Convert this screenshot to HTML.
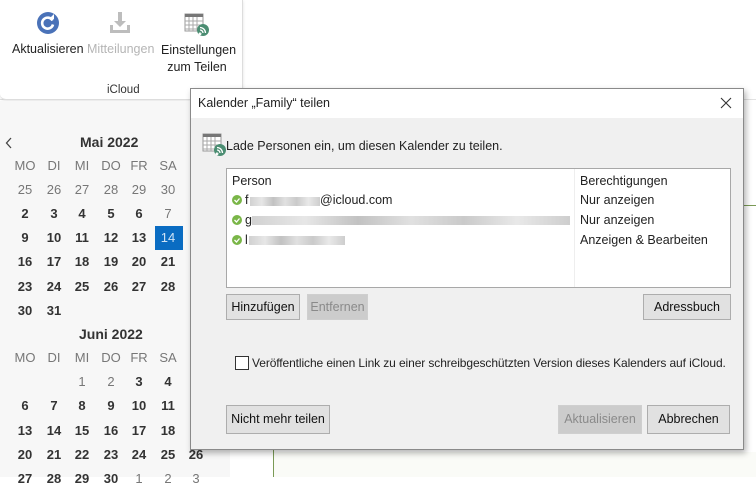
<!DOCTYPE html>
<html><head><meta charset="utf-8"><style>
*{margin:0;padding:0;box-sizing:border-box}
body{width:756px;height:477px;overflow:hidden;position:relative;background:#fff;font-family:"Liberation Sans",sans-serif;font-size:12.5px;color:#222}
.a{position:absolute}
.ribbon{left:0;top:0;width:756px;height:100px;background:#fff;border-bottom:1px solid #e2e2e2}
.pane{left:0;top:101px;width:230px;height:376px;background:#f7f7f7}
.c{position:absolute;width:28px;text-align:center;font-size:13px}
.b{font-weight:bold;color:#333}
.g{color:#777}
.btn{position:absolute;border:1px solid #adadad;background:#e1e1e1;text-align:center;font-size:12.5px;color:#111}
.dis{border-color:#cfcfcf;background:#cccccc;color:#8a8a8a}
.blur{position:absolute;height:9px;background:linear-gradient(90deg,#ccc,#e4e4e4,#bbb,#ddd,#c4c4c4,#e6e6e6,#c8c8c8);opacity:.9}
</style></head><body>
<div class="a ribbon"></div>
<div class="a" style="left:242px;top:6px;width:1px;height:84px;background:#ddd"></div>
<div class="a" style="left:0;top:0;width:243px;height:100px;border-right:1px solid #ddd;border-bottom:1px solid #ddd;border-radius:0 0 6px 6px;box-shadow:0 1px 3px rgba(0,0,0,.12)"></div>
<svg class="a" style="left:36px;top:11px" width="24" height="24" viewBox="0 0 24 24"><circle cx="12" cy="12" r="11" fill="#4a72b8"/><path d="M16.5 9.5A5.5 5.5 0 1 0 17 13.5" stroke="#fff" stroke-width="2.6" fill="none"/><path d="M13 8h5V3z" fill="#fff"/></svg>
<svg class="a" style="left:108px;top:11px" width="24" height="24" viewBox="0 0 24 24"><path d="M10 1h4v9h4l-6 6-6-6h4z" fill="#bdbdbd"/><path d="M2 14v8h20v-8h-3v5H5v-5z" fill="#bdbdbd"/></svg>
<svg class="a" style="left:184px;top:13px" width="26" height="24" viewBox="0 0 26 24"><rect x="1" y="1" width="18" height="17" fill="#fff" stroke="#999"/><rect x="1" y="1" width="18" height="3" fill="#777"/><path d="M1 8h18M1 12h18M1 16h18M5 4v14M9 4v14M13 4v14" stroke="#aaa"/><circle cx="19" cy="17" r="6" fill="#4b8d72"/><path d="M16 20a0.8 0.8 0 1 0 .1 0M16 17a3 3 0 0 1 3 3M16 14.5a5.5 5.5 0 0 1 5.5 5.5" stroke="#fff" stroke-width="1.3" fill="none"/></svg>
<div class="a" style="left:12px;top:42px;font-size:12.5px">Aktualisieren</div>
<div class="a" style="left:87px;top:42px;font-size:12.5px;color:#b5b5b5">Mitteilungen</div>
<div class="a" style="left:161px;top:42px;font-size:12.5px;text-align:center;width:72px;line-height:17px">Einstellungen zum Teilen</div>
<div class="a" style="left:107px;top:84px;font-size:11.5px;color:#333">iCloud</div>
<div class="a pane"></div>
<div class="a" style="left:230px;top:452px;width:526px;height:25px;background:#fafbf7"></div>
<div class="a" style="left:230px;top:452px;width:43px;height:25px;background:#fff"></div>
<div class="a" style="left:273px;top:449px;width:1px;height:28px;background:#7a9a55"></div>
<div class="a" style="left:743px;top:205px;width:13px;height:1px;background:#7a9a55"></div>
<svg class="a" style="left:5px;top:137px" width="8" height="12"><path d="M6 1L1.5 6 6 11" stroke="#444" stroke-width="1.3" fill="none"/></svg>
<div class="a b" style="left:80px;top:134px;font-size:14px">Mai 2022</div>
<div class="a b" style="left:79px;top:326px;font-size:14px">Juni 2022</div>
<div id="cal"></div>
<div class="a" style="left:155px;top:226px;width:28px;height:24px;background:#0a6cc2"></div>
<div class="a" style="left:190px;top:88px;width:554px;height:362px;background:#f0f0f0;border:1px solid #8a8a8a;box-shadow:2px 3px 6px rgba(0,0,0,.3)"></div>
<div class="a" style="left:191px;top:89px;width:552px;height:29px;background:#fff"></div>
<div class="a" style="left:198px;top:96px;font-size:12.5px">Kalender „Family“ teilen</div>
<svg class="a" style="left:720px;top:97px" width="12" height="12"><path d="M1 1l10 10M11 1L1 11" stroke="#333" stroke-width="1.1"/></svg>
<svg class="a" style="left:202px;top:133px" width="26" height="24" viewBox="0 0 26 24"><rect x="1" y="1" width="18" height="17" fill="#fff" stroke="#999"/><rect x="1" y="1" width="18" height="3" fill="#777"/><path d="M1 8h18M1 12h18M1 16h18M5 4v14M9 4v14M13 4v14" stroke="#aaa"/><circle cx="18" cy="17" r="6" fill="#4b8d72"/><path d="M15 20a0.8 0.8 0 1 0 .1 0M15 17a3 3 0 0 1 3 3M15 14.5a5.5 5.5 0 0 1 5.5 5.5" stroke="#fff" stroke-width="1.3" fill="none"/></svg>
<div class="a" style="left:226px;top:139px">Lade Personen ein, um diesen Kalender zu teilen.</div>
<div class="a" style="left:226px;top:168px;width:505px;height:120px;background:#fff;border:1px solid #a8a8a8"></div>
<div class="a" style="left:574px;top:169px;width:1px;height:118px;background:#eee"></div>
<div class="a" style="left:232px;top:174px">Person</div>
<div class="a" style="left:580px;top:174px">Berechtigungen</div>
<div class="a" style="left:580px;top:193px">Nur anzeigen</div>
<div class="a" style="left:580px;top:213px">Nur anzeigen</div>
<div class="a" style="left:580px;top:233px">Anzeigen &amp; Bearbeiten</div>
<svg class="a" style="left:232px;top:195px" width="10" height="50"><g fill="#7ab648"><circle cx="5" cy="5" r="5"/><circle cx="5" cy="25" r="5"/><circle cx="5" cy="45" r="5"/></g><path d="M2.5 5l2 2 3-3.5M2.5 25l2 2 3-3.5M2.5 45l2 2 3-3.5" stroke="#fff" stroke-width="1.3" fill="none"/></svg>
<div class="a" style="left:245px;top:193px">f</div>
<div class="blur" style="left:250px;top:197px;width:70px"></div>
<div class="a" style="left:320px;top:193px">@icloud.com</div>
<div class="a" style="left:245px;top:213px">g</div>
<div class="blur" style="left:252px;top:216px;width:318px"></div>
<div class="a" style="left:245px;top:233px">l</div>
<div class="blur" style="left:249px;top:236px;width:96px"></div>
<div class="btn" style="left:226px;top:294px;width:74px;height:26px;line-height:24px">Hinzufügen</div>
<div class="btn dis" style="left:307px;top:294px;width:61px;height:26px;line-height:24px">Entfernen</div>
<div class="btn" style="left:643px;top:294px;width:88px;height:26px;line-height:24px">Adressbuch</div>
<div class="a" style="left:235px;top:356px;width:14px;height:14px;border:1px solid #333;background:#fff"></div>
<div class="a" style="left:252px;top:356px;font-size:12px;letter-spacing:-0.1px;white-space:nowrap">Veröffentliche einen Link zu einer schreibgeschützten Version dieses Kalenders auf iCloud.</div>
<div class="btn" style="left:226px;top:405px;width:104px;height:29px;line-height:27px">Nicht mehr teilen</div>
<div class="btn dis" style="left:558px;top:405px;width:84px;height:29px;line-height:27px">Aktualisieren</div>
<div class="btn" style="left:647px;top:405px;width:83px;height:29px;line-height:27px">Abbrechen</div>
<script>
var xs=[11,40,68,97,125,154,182];var h='';
function row(y,arr,cls){arr.forEach(function(v,i){if(v==='')return;var c=cls?cls[i]:'b';h+='<div class="c '+c+'" style="left:'+xs[i]+'px;top:'+y+'px">'+v+'</div>';});}
var d=['MO','DI','MI','DO','FR','SA'];
row(158,d,['g','g','g','g','g','g']);
row(182,['25','26','27','28','29','30'],['g','g','g','g','g','g']);
row(206,['2','3','4','5','6','7'],['b','b','b','b','b','g']);
row(230,['9','10','11','12','13','14']);
row(254,['16','17','18','19','20','21']);
row(279,['23','24','25','26','27','28']);
row(303,['30','31']);
row(350,d,['g','g','g','g','g','g']);
row(374,['','','1','2','3','4'],['g','g','g','g','b','b']);
row(398,['6','7','8','9','10','11']);
row(423,['13','14','15','16','17','18']);
row(447,['20','21','22','23','24','25','26']);
row(471,['27','28','29','30','1','2','3'],['b','b','b','b','g','g','g']);
document.getElementById('cal').innerHTML=h;
</script>
<style>.c[style*="top:230px"][style*="left:154px"]{color:#cfe3f5;font-weight:normal;z-index:2}</style>
</body></html>
